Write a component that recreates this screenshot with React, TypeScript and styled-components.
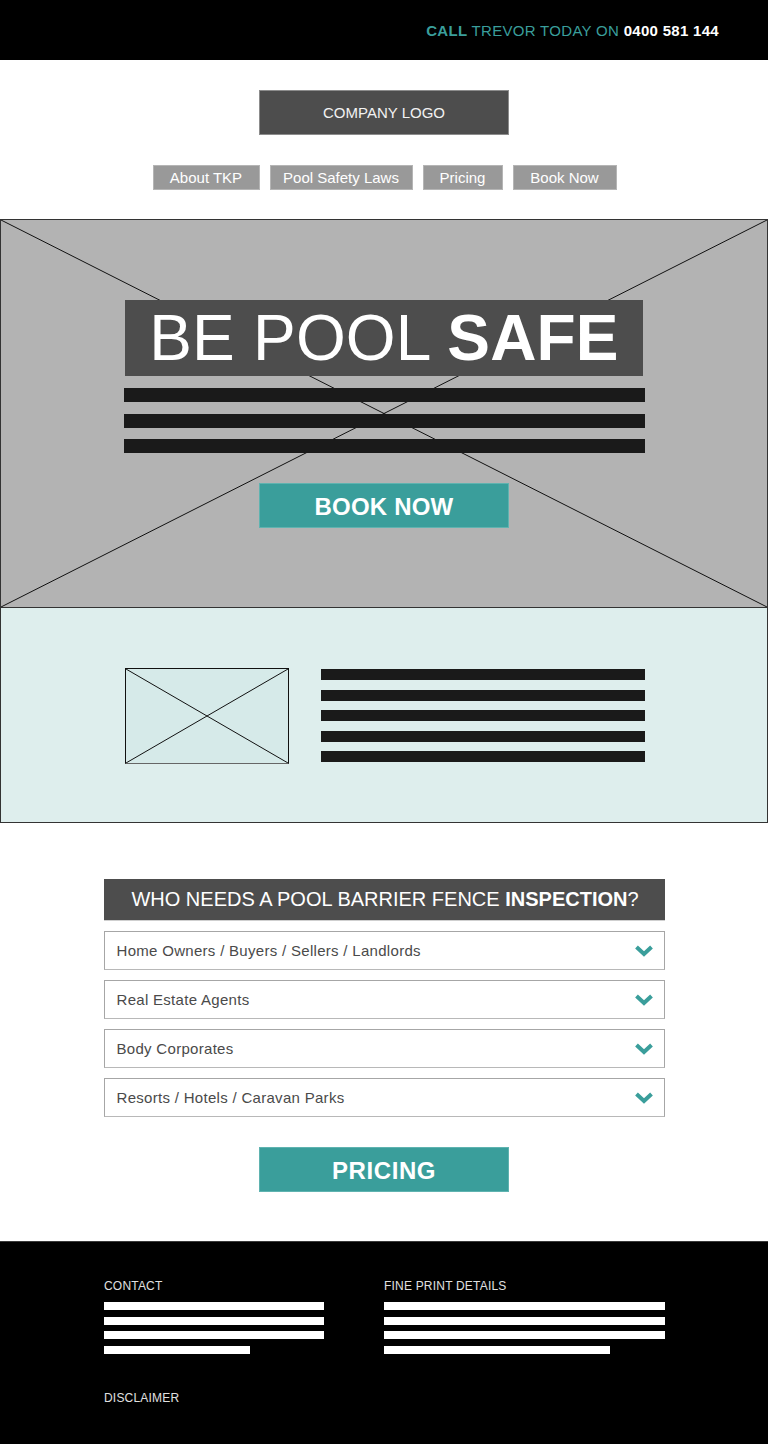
import React from "react";
import styled, { createGlobalStyle } from "styled-components";

const GlobalStyle = createGlobalStyle`
  html, body { margin: 0; padding: 0; background: #ffffff; }
  body { font-family: "Liberation Sans", Arial, Helvetica, sans-serif; }
  * { box-sizing: border-box; }
`;

const TEAL = "#3a9e9b";

const Page = styled.div`
  width: 768px;
  min-height: 1444px;
  display: flex;
  flex-direction: column;
  background: #ffffff;
`;

const TopBar = styled.div`
  height: 60px;
  background: #000;
  display: flex;
  align-items: center;
  justify-content: flex-end;
  padding-right: 49px;
  font-size: 15px;
  letter-spacing: 0.3px;
  color: ${TEAL};
`;

const Strong = styled.b<{ $white?: boolean }>`
  font-weight: 700;
  color: ${(p) => (p.$white ? "#ffffff" : TEAL)};
`;

const Header = styled.header`
  height: 159px;
  display: flex;
  flex-direction: column;
  align-items: center;
  padding-top: 30px;
`;

const Logo = styled.div`
  width: 250px;
  height: 45px;
  background: #4d4d4d;
  border: 1px solid #8c8c8c;
  color: #f2f2f2;
  font-size: 15px;
  display: flex;
  align-items: center;
  justify-content: center;
`;

const Nav = styled.nav`
  margin-top: 30px;
  display: flex;
  gap: 10px;
  padding-left: 1px;
`;

const NavItem = styled.a<{ $w: number }>`
  width: ${(p) => p.$w}px;
  height: 25px;
  background: #999999;
  border: 1px solid #b5b5b5;
  color: #ffffff;
  font-size: 15px;
  display: flex;
  align-items: center;
  justify-content: center;
  text-decoration: none;
`;

const Hero = styled.section`
  position: relative;
  height: 388px;
  background: #b3b3b3;
  border: 1px solid #333;
  border-bottom: none;
  display: flex;
  flex-direction: column;
  align-items: center;
  padding-top: 80px;
`;

const Cross = styled.svg`
  position: absolute;
  inset: 0;
  width: 100%;
  height: 100%;
  pointer-events: none;
`;

const HeroTitle = styled.h1`
  position: relative;
  margin: 0;
  width: 518px;
  height: 76px;
  background: #4d4d4d;
  color: #ffffff;
  font-size: 64px;
  font-weight: 400;
  line-height: 76px;
  text-align: center;
  white-space: nowrap;
  letter-spacing: 0.2px;
`;

const HeroLines = styled.div`
  position: relative;
  margin-top: 12px;
  display: flex;
  flex-direction: column;
  gap: 11.5px;
`;

const Bar = styled.div<{ $w: number; $h: number; $c: string }>`
  width: ${(p) => p.$w}px;
  height: ${(p) => p.$h}px;
  background: ${(p) => p.$c};
`;

const TealButton = styled.a`
  position: relative;
  width: 250px;
  height: 45px;
  background: ${TEAL};
  border: 1px solid #5fb3b0;
  color: #ffffff;
  font-size: 24px;
  font-weight: 700;
  display: flex;
  align-items: center;
  justify-content: center;
  padding-top: 3px;
  text-decoration: none;
  letter-spacing: 0.2px;
`;

const HeroButton = styled(TealButton)`
  margin-top: 30px;
`;

const Feature = styled.section`
  height: 216px;
  background: #deeeed;
  border: 1px solid #333;
  display: flex;
  align-items: center;
  justify-content: center;
  gap: 32px;
  padding-left: 1px;
  padding-top: 1px;
`;

const Placeholder = styled.div`
  position: relative;
  width: 164px;
  height: 96px;
  background: #d6eae9;
  border: 1px solid #111;
  border-bottom-color: #666;
`;

const FeatureLines = styled.div`
  display: flex;
  flex-direction: column;
  gap: 9.5px;
`;

const Who = styled.section`
  height: 418px;
  display: flex;
  flex-direction: column;
  align-items: center;
  padding-top: 56px;
`;

const WhoHeading = styled.h2`
  margin: 0;
  width: 561px;
  height: 42px;
  background: #4d4d4d;
  border-bottom: 1px solid #cfcfcf;
  color: #ffffff;
  font-size: 20px;
  font-weight: 400;
  display: flex;
  align-items: center;
  justify-content: center;
  white-space: nowrap;
  padding-left: 2px;
`;

const Accordion = styled.div`
  margin-top: 10px;
  display: flex;
  flex-direction: column;
  gap: 10px;
`;

const Row = styled.div`
  width: 561px;
  height: 39px;
  border: 1px solid #a6a6a6;
  border-bottom-color: #b8b8b8;
  display: flex;
  align-items: center;
  justify-content: space-between;
  padding: 0 10px 0 12px;
  color: #4a4a4a;
  font-size: 15px;
  letter-spacing: 0.3px;
`;

const PricingButton = styled(TealButton)`
  margin-top: 30px;
  letter-spacing: 0.6px;
`;

const Footer = styled.footer`
  height: 203px;
  background: #000;
  border-top: 1px solid #3a3a3a;
  padding: 37px 0 0 104px;
  display: flex;
  flex-direction: column;
`;

const FooterCols = styled.div`
  display: flex;
  gap: 60px;
`;

const FooterCol = styled.div`
  display: flex;
  flex-direction: column;
`;

const FooterLabel = styled.div`
  color: #e0e0e0;
  font-size: 12px;
  line-height: 14px;
  height: 14px;
  letter-spacing: 0.2px;
`;

const FooterLines = styled.div`
  margin-top: 9px;
  display: flex;
  flex-direction: column;
  gap: 6.7px;
`;

const Disclaimer = styled(FooterLabel)`
  margin-top: 37px;
`;

const Chevron = () => (
  <svg width="20" height="14" viewBox="0 0 20 14" aria-hidden>
    <polyline
      points="2.5,3 10,10 17.5,3"
      fill="none"
      stroke={TEAL}
      strokeWidth="4"
      strokeLinejoin="miter"
    />
  </svg>
);

const XLines = ({ color = "#111" }: { color?: string }) => (
  <Cross viewBox="0 0 100 100" preserveAspectRatio="none" aria-hidden>
    <line x1="0" y1="0" x2="100" y2="100" stroke={color} strokeWidth="1" vectorEffect="non-scaling-stroke" />
    <line x1="100" y1="0" x2="0" y2="100" stroke={color} strokeWidth="1" vectorEffect="non-scaling-stroke" />
  </Cross>
);

const navItems = [
  { label: "About TKP", w: 107 },
  { label: "Pool Safety Laws", w: 143 },
  { label: "Pricing", w: 80 },
  { label: "Book Now", w: 104 },
];

const rows = [
  "Home Owners / Buyers / Sellers / Landlords",
  "Real Estate Agents",
  "Body Corporates",
  "Resorts / Hotels / Caravan Parks",
];

export default function App() {
  return (
    <>
      <GlobalStyle />
      <Page>
        <TopBar>
          <span>
            <Strong>CALL</Strong> TREVOR TODAY ON <Strong $white>0400 581 144</Strong>
          </span>
        </TopBar>

        <Header>
          <Logo>COMPANY LOGO</Logo>
          <Nav>
            {navItems.map((n) => (
              <NavItem key={n.label} $w={n.w} href="#">
                {n.label}
              </NavItem>
            ))}
          </Nav>
        </Header>

        <Hero>
          <XLines />
          <HeroTitle>
            BE POOL <b>SAFE</b>
          </HeroTitle>
          <HeroLines>
            {[0, 1, 2].map((i) => (
              <Bar key={i} $w={521} $h={14} $c="#1a1a1a" />
            ))}
          </HeroLines>
          <HeroButton href="#">BOOK NOW</HeroButton>
        </Hero>

        <Feature>
          <Placeholder>
            <XLines />
          </Placeholder>
          <FeatureLines>
            {[0, 1, 2, 3, 4].map((i) => (
              <Bar key={i} $w={324} $h={11} $c="#1a1a1a" />
            ))}
          </FeatureLines>
        </Feature>

        <Who>
          <WhoHeading>
            WHO NEEDS A POOL BARRIER FENCE&nbsp;<b>INSPECTION</b>?
          </WhoHeading>
          <Accordion>
            {rows.map((r) => (
              <Row key={r}>
                <span>{r}</span>
                <Chevron />
              </Row>
            ))}
          </Accordion>
          <PricingButton href="#">PRICING</PricingButton>
        </Who>

        <Footer>
          <FooterCols>
            <FooterCol>
              <FooterLabel>CONTACT</FooterLabel>
              <FooterLines>
                <Bar $w={220} $h={8} $c="#ffffff" />
                <Bar $w={220} $h={8} $c="#ffffff" />
                <Bar $w={220} $h={8} $c="#ffffff" />
                <Bar $w={146} $h={8} $c="#ffffff" />
              </FooterLines>
            </FooterCol>
            <FooterCol>
              <FooterLabel>FINE PRINT DETAILS</FooterLabel>
              <FooterLines>
                <Bar $w={281} $h={8} $c="#ffffff" />
                <Bar $w={281} $h={8} $c="#ffffff" />
                <Bar $w={281} $h={8} $c="#ffffff" />
                <Bar $w={226} $h={8} $c="#ffffff" />
              </FooterLines>
            </FooterCol>
          </FooterCols>
          <Disclaimer>DISCLAIMER</Disclaimer>
        </Footer>
      </Page>
    </>
  );
}
